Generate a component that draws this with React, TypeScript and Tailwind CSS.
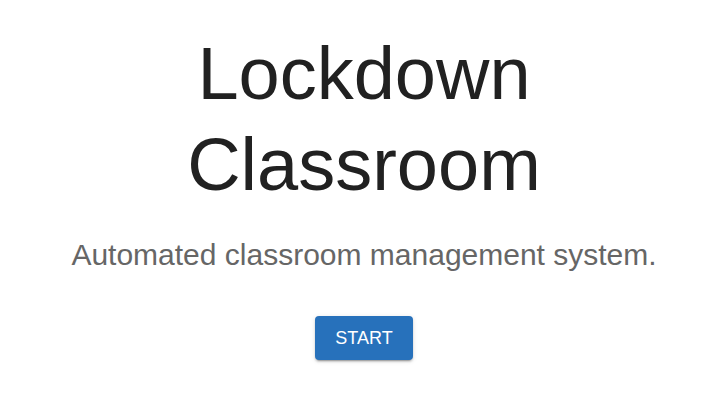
export default function App() {
  return (
    <div className="w-[710px] h-[408px] bg-white pl-[18px] flex flex-col items-center font-['Liberation_Sans',Arial,sans-serif]">
      <h1 className="mt-[28px] text-[74px] leading-[91px] text-[#212121] text-center font-normal">
        Lockdown
        <br />
        Classroom
      </h1>
      <p className="mt-[27px] text-[30px] leading-[36px] text-[#666666] text-center">
        Automated classroom management system.
      </p>
      <button className="mt-[43px] w-[98px] h-[44px] rounded-[4px] bg-[#2771bb] text-white text-[18px] shadow-[0_3px_1px_-2px_rgba(0,0,0,0.2),0_2px_2px_0_rgba(0,0,0,0.14),0_1px_5px_0_rgba(0,0,0,0.12)]">
        START
      </button>
    </div>
  );
}
